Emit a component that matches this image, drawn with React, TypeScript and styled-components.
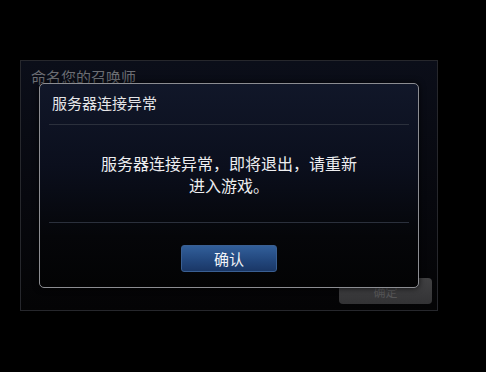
import React from "react";
import styled, { createGlobalStyle } from "styled-components";

const GlobalStyle = createGlobalStyle`
  html, body {
    margin: 0;
    padding: 0;
    background: #000;
    width: 486px;
    height: 372px;
    overflow: hidden;
    font-family: "Noto Sans CJK SC", "Noto Sans", sans-serif;
  }
`;

const Screen = styled.div`
  width: 486px;
  height: 372px;
  padding: 60px 0 0 20px;
  box-sizing: border-box;
  background: #000;
`;

const Panel = styled.div`
  position: relative;
  width: 418px;
  height: 251px;
  box-sizing: border-box;
  border: 1px solid #26272c;
  background: linear-gradient(180deg, #0b0e19 0%, #07080e 55%, #040405 100%);
  display: flex;
  flex-direction: column;
  padding: 7px 5px 6px 10px;
`;

const PanelTitle = styled.div`
  color: #6c6e74;
  font-size: 15px;
  line-height: 18px;
`;

const PanelFooter = styled.div`
  margin-top: auto;
  display: flex;
  justify-content: flex-end;
`;

const GreyButton = styled.div`
  width: 93px;
  height: 26px;
  border-radius: 4px;
  background: linear-gradient(180deg, #414143 0%, #333335 100%);
  color: #555557;
  font-size: 12px;
  display: flex;
  align-items: center;
  justify-content: center;
`;

const Dialog = styled.div`
  position: absolute;
  left: 18px;
  top: 22px;
  width: 380px;
  height: 205px;
  box-sizing: border-box;
  border: 1px solid #8c8d92;
  border-radius: 5px;
  background: linear-gradient(180deg, #111729 0%, #0b0f1d 40%, #050609 75%, #030304 100%);
  box-shadow: 0 0 6px rgba(0, 0, 0, 0.8);
  display: flex;
  flex-direction: column;
  padding: 0 9px;
`;

const DialogTitle = styled.div`
  color: #e6e6e8;
  font-size: 15px;
  line-height: 20px;
  padding: 9px 0 11px 3px;
`;

const Divider = styled.div`
  height: 1px;
  background: #2b303c;
`;

const Message = styled.div`
  height: 97px;
  display: flex;
  align-items: center;
  justify-content: center;
  text-align: center;
  color: #eeeef0;
  font-size: 16px;
  line-height: 22px;
  padding: 0 40px;
`;

const Footer = styled.div`
  display: flex;
  justify-content: center;
  padding-top: 22px;
`;

const ConfirmButton = styled.button`
  width: 96px;
  height: 27px;
  border: 1px solid #3a5f92;
  border-radius: 3px;
  background: linear-gradient(180deg, #325f9a 0%, #23487e 55%, #1a3766 100%);
  color: #f2f4f8;
  font-family: inherit;
  font-size: 15px;
  line-height: 20px;
  padding: 0;
  cursor: pointer;
`;

export default function App() {
  return (
    <>
      <GlobalStyle />
      <Screen>
        <Panel>
          <PanelTitle>命名您的召唤师</PanelTitle>
          <PanelFooter>
            <GreyButton>确定</GreyButton>
          </PanelFooter>
          <Dialog>
            <DialogTitle>服务器连接异常</DialogTitle>
            <Divider />
            <Message>
              服务器连接异常，即将退出，请重新
              <br />
              进入游戏。
            </Message>
            <Divider />
            <Footer>
              <ConfirmButton>确认</ConfirmButton>
            </Footer>
          </Dialog>
        </Panel>
      </Screen>
    </>
  );
}
